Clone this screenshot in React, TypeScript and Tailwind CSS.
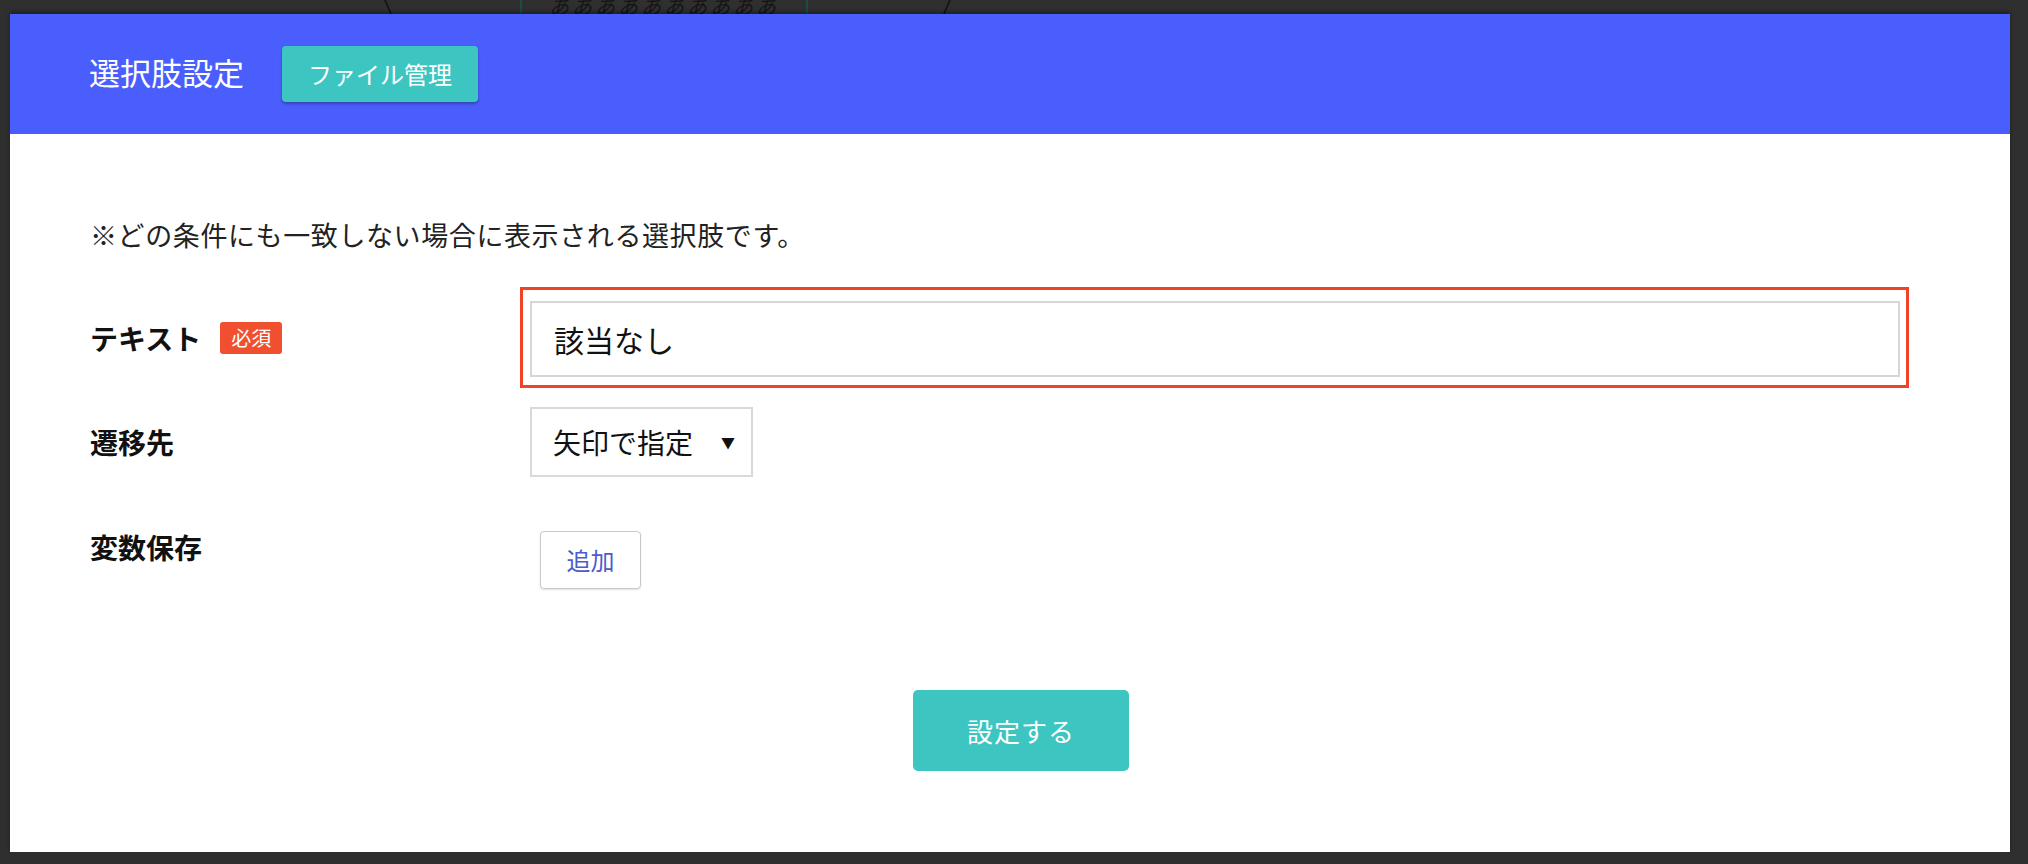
import { useState } from "react";

const jp = "font-['Noto_Sans_CJK_JP','Noto_Sans',sans-serif]";

// canvas behind the dialog: a node and its connectors peeking out at the top
function FlowCanvas() {
  return (
    <div className="absolute inset-0">
      <svg className="absolute left-0 top-0" width="2028" height="20" viewBox="0 0 2028 20">
        <line x1="385" y1="0" x2="392" y2="16" stroke="#111" strokeWidth="1.5" />
        <line x1="950" y1="0" x2="943" y2="16" stroke="#111" strokeWidth="1.5" />
      </svg>
      <div className="absolute left-[520px] top-[-28px] flex h-[46px] w-[288px] items-end justify-center border-x-2 border-[#1d4a41] pb-[2px]">
        <span className="text-[20px] italic leading-none tracking-[3px] text-[#151515]">
          ああああああああああ
        </span>
      </div>
    </div>
  );
}

function Row({ label, badge, top, children }: { label: string; badge?: boolean; top?: boolean; children: React.ReactNode }) {
  return (
    <div className={`flex ${top ? "items-start" : "items-center"}`}>
      <div className="flex w-[440px] shrink-0 items-center">
        <span className="text-[28px] font-bold leading-[36px] text-[#111]">{label}</span>
        {badge && (
          <span className="ml-[19px] rounded-[3px] bg-[#f0502f] px-[11px] text-[20px] leading-[32px] text-white">
            必須
          </span>
        )}
      </div>
      <div className="flex-1">{children}</div>
    </div>
  );
}

export default function App() {
  const [text, setText] = useState("該当なし");

  return (
    <div className={`relative h-[864px] w-full overflow-hidden bg-[#2f2f2f] ${jp}`}>
      <FlowCanvas />

      {/* dialog */}
      <div className="absolute left-[10px] top-[14px] flex h-[838px] w-[2000px] flex-col bg-white shadow-[0_-2px_4px_rgba(0,0,0,0.35)]">
        <header className="flex h-[120px] shrink-0 items-center bg-[#4a5efe] pl-[79px]">
          <h1 className="mt-[-6px] text-[31px] font-normal leading-none text-white">選択肢設定</h1>
          <button className="ml-[38px] h-[56px] w-[196px] rounded-[4px] bg-[#3dc6c1] text-[24px] text-white shadow-[0_2px_3px_rgba(0,0,0,0.3)]">
            ファイル管理
          </button>
        </header>

        <div className="flex flex-col pl-[80px] pr-[101px] pt-[83px]">
          <p className="text-[27px] leading-[36px] tracking-[0.6px] text-[#222]">
            ※どの条件にも一致しない場合に表示される選択肢です。
          </p>

          <div className="mt-[34px]">
            <Row label="テキスト" badge>
              <div className="-ml-[10px] border-[3px] border-[#ee4326] pb-[8px] pl-[7px] pr-[6px] pt-[11px]">
                <input
                  value={text}
                  onChange={(e) => setText(e.target.value)}
                  className="block h-[76px] w-full border-2 border-[#d6d6d6] px-[22px] text-[30px] text-[#111] outline-none"
                />
              </div>
            </Row>
          </div>

          <div className="mt-[19px]">
            <Row label="遷移先">
              <div className="flex h-[70px] w-[223px] items-center justify-between border-2 border-[#d9d9d9] pl-[21px] pr-[16px]">
                <span className="text-[28px] text-[#111]">矢印で指定</span>
                <span className="text-[14px] text-[#111]">▼</span>
              </div>
            </Row>
          </div>

          <div className="mt-[52px]">
            <Row label="変数保存" top>
              <button className="ml-[10px] mt-[2px] h-[58px] w-[101px] rounded-[4px] border border-[#c9c9c9] bg-white text-[24px] text-[#4b5ccc] shadow-[0_1px_2px_rgba(0,0,0,0.12)]">
                追加
              </button>
            </Row>
          </div>
        </div>

        <div className="mt-[101px] flex justify-center pl-[22px]">
          <button className="h-[81px] w-[216px] rounded-[5px] bg-[#3dc6c1] text-[26px] tracking-[1px] text-white">
            設定する
          </button>
        </div>
      </div>
    </div>
  );
}
